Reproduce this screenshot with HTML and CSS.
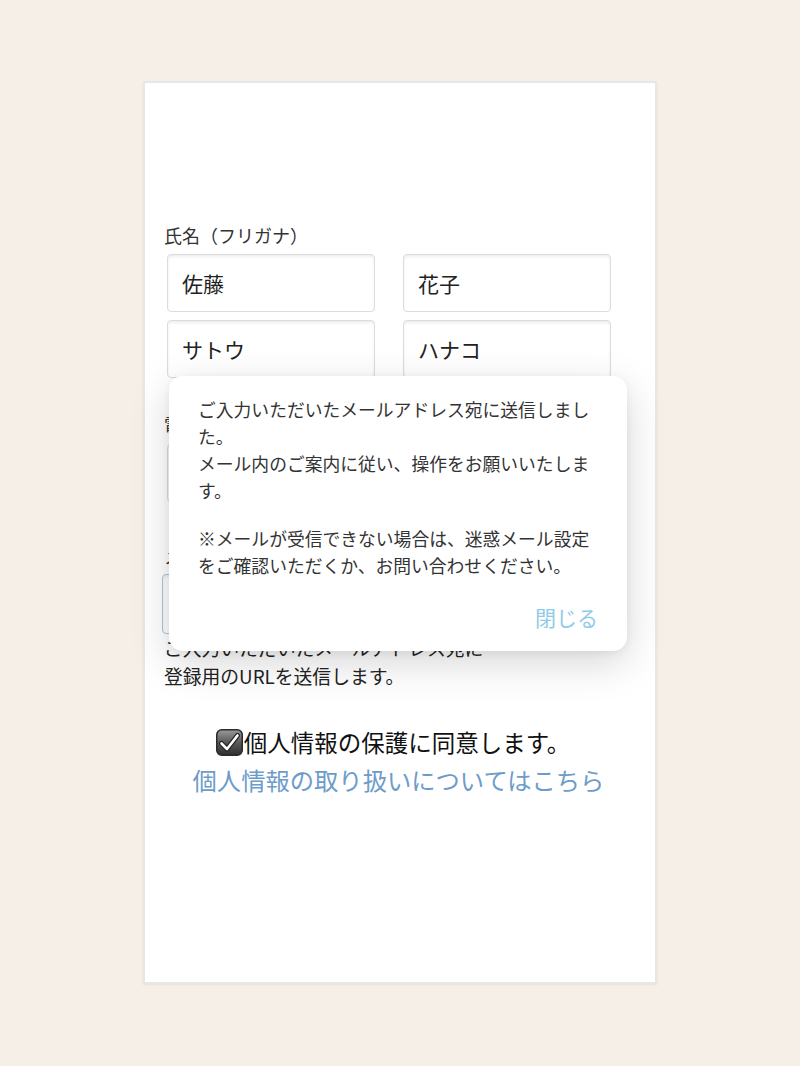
FILE: index.html
```html
<!DOCTYPE html>
<html lang="ja">
<head>
<meta charset="utf-8">
<title>会員登録</title>
<link rel="stylesheet" href="styles.css">
</head>
<body>
<div class="card">
  <div class="header-space"></div>
  <form class="form">
    <div class="label label-name">氏名（フリガナ）</div>
    <div class="grid">
      <div class="input">佐藤</div>
      <div class="input">花子</div>
      <div class="input">サトウ</div>
      <div class="input">ハナコ</div>
    </div>
    <div class="label label-tel">電話番号</div>
    <div class="grid">
      <div class="input"></div>
      <div class="input"></div>
    </div>
    <div class="label label-mail">メールアドレス</div>
    <div class="input input-mail"></div>
    <p class="help">ご入力いただいたメールアドレス宛に<br>登録用のURLを送信します。</p>
    <div class="agree">
      <svg class="check" width="27" height="27" viewBox="0 0 27 27" aria-hidden="true">
        <defs>
          <linearGradient id="cb" x1="0" y1="0" x2="0" y2="1">
            <stop offset="0" stop-color="#9a9a9a"/>
            <stop offset="0.5" stop-color="#5a5a5a"/>
            <stop offset="1" stop-color="#2e2e2e"/>
          </linearGradient>
        </defs>
        <rect x="0.75" y="0.75" width="25.5" height="25.5" rx="5" fill="url(#cb)" stroke="#2a2a2a" stroke-width="1.5"/>
        <path d="M5.5 14.5 L11 20 L21.5 6.5" fill="none" stroke="#222" stroke-width="5" stroke-linecap="round" stroke-linejoin="round"/>
        <path d="M5.5 14.5 L11 20 L21.5 6.5" fill="none" stroke="#fff" stroke-width="2.6" stroke-linecap="round" stroke-linejoin="round"/>
      </svg>
      <span>個人情報の保護に同意します。</span>
    </div>
    <a class="policy" href="#">個人情報の取り扱いについてはこちら</a>
  </form>

  <div class="modal" role="dialog">
    <p class="msg">ご入力いただいたメールアドレス宛に送信しました。<br>メール内のご案内に従い、操作をお願いいたします。</p>
    <p class="msg msg-note">※メールが受信できない場合は、迷惑メール設定をご確認いただくか、お問い合わせください。</p>
    <div class="close-row"><button class="close" type="button">閉じる</button></div>
  </div>
</div>
</body>
</html>
```

FILE: styles.css
```css
* { box-sizing: border-box; }

html, body {
  margin: 0;
  padding: 0;
}

body {
  background: #f6efe8;
  font-family: "Noto Sans CJK JP", "Noto Sans", sans-serif;
  color: #333;
  min-height: 1066px;
}

.card {
  position: relative;
  width: 514px;
  height: 903px;
  margin: 81px auto 0;
  background: #fff;
  border: 2px solid #e7e7e7;
  box-shadow: 0 1px 2px rgba(0,0,0,0.06);
}

.header-space {
  height: 140px;
}

.form {
  padding: 0 19px;
  display: flex;
  flex-direction: column;
}

.label {
  font-size: 18px;
  line-height: 24px;
  color: #333;
  height: 24px;
}

.label-name { margin-bottom: 7px; }
.label-tel { margin-top: 34px; margin-bottom: 8px; }
.label-mail { margin-top: 42px; margin-bottom: 6px; }

.grid {
  display: grid;
  grid-template-columns: 208px 208px;
  column-gap: 28px;
  row-gap: 8px;
  margin-left: 3px;
}

.input {
  height: 58px;
  border: 1px solid #dcdcdc;
  border-radius: 4px;
  background: #fff;
  box-shadow: inset 0 2px 3px rgba(0,0,0,0.07);
  padding-left: 14px;
  font-size: 21px;
  line-height: 56px;
  color: #222;
}

.input-mail {
  margin-left: -2px;
  width: 448px;
  height: 60px;
  border-color: #a7c6e6;
}

.help {
  margin: 0;
  font-size: 18.8px;
  line-height: 28px;
  color: #222;
}

.agree {
  margin-top: 37px;
  display: flex;
  align-items: center;
  justify-content: center;
  gap: 1px;
  font-size: 23.5px;
  line-height: 30px;
  color: #111;
  margin-right: 14px;
}

.check { flex: none; }

.policy {
  margin-top: 8px;
  text-align: center;
  font-size: 24.3px;
  line-height: 30px;
  color: #6d9ccb;
  text-decoration: none;
  margin-right: 3px;
}

.modal {
  position: absolute;
  left: 24px;
  top: 293px;
  width: 458px;
  height: 275px;
  background: #fff;
  border-radius: 14px;
  box-shadow: 0 12px 40px rgba(0,0,0,0.16), 0 2px 8px rgba(0,0,0,0.06);
  padding: 20px 29px 20px 29px;
}

.msg {
  margin: 0;
  font-size: 17.8px;
  line-height: 27px;
  color: #333;
}

.msg-note {
  margin-top: 21px;
}

.close-row {
  display: flex;
  justify-content: flex-end;
  margin-top: 25px;
}

.close {
  border: 0;
  background: none;
  padding: 0;
  font-family: inherit;
  font-size: 21px;
  line-height: 27px;
  color: #8fcbe9;
  cursor: pointer;
}
```
